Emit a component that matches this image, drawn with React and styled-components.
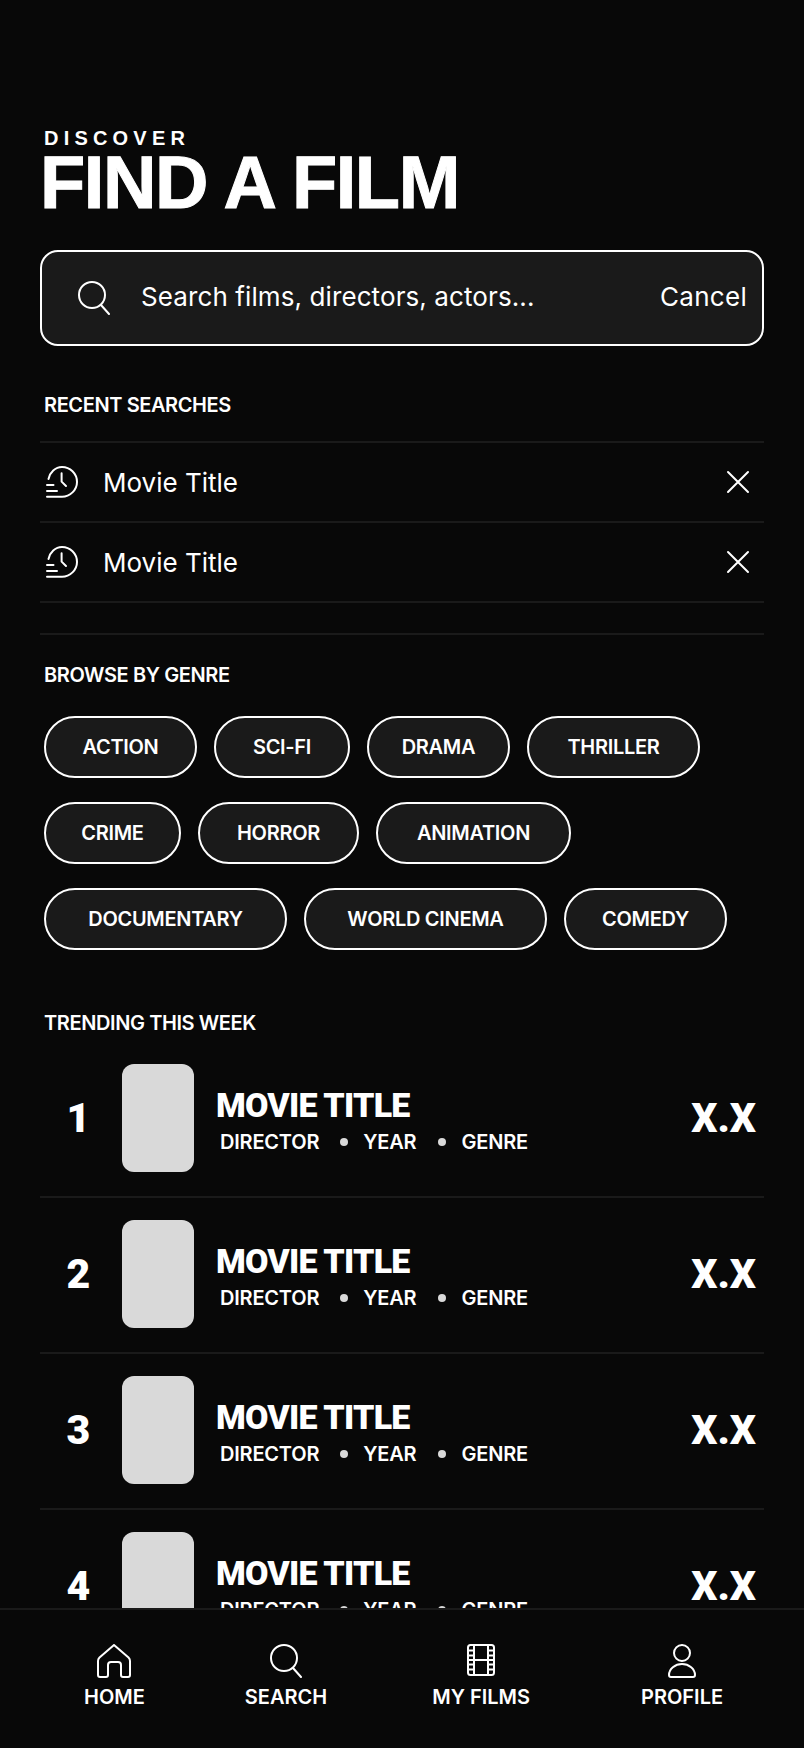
import React from 'react';
import styled, { createGlobalStyle } from 'styled-components';

const GlobalStyle = createGlobalStyle`
  html, body { margin: 0; padding: 0; background: #080808; }
  * { box-sizing: border-box; }
`;

const Screen = styled.div`
  width: 804px;
  height: 1748px;
  background: #080808;
  color: #fff;
  font-family: Inter, "Liberation Sans", sans-serif;
  display: flex;
  flex-direction: column;
  overflow: hidden;
`;

const Scroll = styled.main`
  flex: 1;
  min-height: 0;
  overflow: hidden;
  padding: 129px 40px 0;
`;

const Eyebrow = styled.div`
  font-family: "Liberation Sans", sans-serif;
  font-weight: 700;
  font-size: 20px;
  line-height: 18px;
  letter-spacing: 5.2px;
  margin-left: 4px;
`;

const Title = styled.h1`
  margin: 6px 0 0;
  font-family: "Liberation Sans", sans-serif;
  font-weight: 700;
  font-size: 74px;
  line-height: 60px;
  letter-spacing: -1.4px;
  -webkit-text-stroke: 1px #fff;
`;

const SearchBox = styled.div`
  margin-top: 37px;
  height: 96px;
  display: flex;
  align-items: center;
  padding: 0 15px 0 36px;
  background: #1a1a1a;
  border: 2px solid #fff;
  border-radius: 18px;
`;

const SearchText = styled.span`
  flex: 1;
  margin: 0 0 3px 31px;
  font-size: 26px;
  letter-spacing: 0.1px;
`;

const Cancel = styled.span`
  margin-bottom: 3px;
  font-size: 26px;
  letter-spacing: 0.3px;
`;

const SectionLabel = styled.h2`
  margin: ${(p) => p.$top}px 0 0 4px;
  font-size: 20px;
  line-height: 24px;
  font-weight: 600;
  letter-spacing: -0.4px;
`;

const RecentList = styled.div`
  margin-top: 24px;
  border-top: 2px solid #1a1a1a;
`;

const RecentRow = styled.div`
  height: 80px;
  display: flex;
  align-items: center;
  padding: 0 14px 0 6px;
  border-bottom: 2px solid #1a1a1a;
`;

const RecentName = styled.span`
  flex: 1;
  margin-left: 25px;
  font-size: 26px;
`;

const Divider = styled.div`
  margin-top: 30px;
  height: 2px;
  background: #1a1a1a;
`;

const ChipGroup = styled.div`
  margin: 29px 0 0 4px;
  display: flex;
  flex-direction: column;
  gap: 24px;
`;

const ChipRow = styled.div`
  display: flex;
  gap: 17px;
`;

const Chip = styled.span`
  width: ${(p) => p.$w}px;
  height: 62px;
  display: flex;
  align-items: center;
  justify-content: center;
  background: #1a1a1a;
  border: 2px solid #fff;
  border-radius: 31px;
  font-size: 20px;
  font-weight: 600;
  letter-spacing: -0.3px;
`;

const TrendList = styled.div`
  margin-top: 7px;
`;

const TrendRow = styled.div`
  height: 156px;
  padding: 22px 8px 0 0;
  display: flex;
  align-items: flex-start;
  border-bottom: 2px solid #1a1a1a;
`;

const Rank = styled.span`
  width: 77px;
  margin-right: 5px;
  flex: none;
  height: 108px;
  display: flex;
  align-items: center;
  justify-content: center;
  font-family: Roboto, sans-serif;
  font-size: 41px;
  font-weight: 900;
`;

const Poster = styled.div`
  width: 72px;
  height: 108px;
  flex: none;
  background: #d9d9d9;
  border-radius: 12px;
`;

const Info = styled.div`
  flex: 1;
  margin-left: 22px;
  padding-top: 21px;
`;

const MovieName = styled.div`
  font-family: Roboto, sans-serif;
  font-size: 34px;
  line-height: 40px;
  font-weight: 900;
  letter-spacing: -0.8px;
`;

const Meta = styled.div`
  margin: 5px 0 0 4px;
  display: flex;
  align-items: center;
  font-size: 20px;
  line-height: 24px;
  font-weight: 600;
  letter-spacing: -0.2px;
`;

const Dot = styled.i`
  width: 8px;
  height: 8px;
  margin: 0 15px 0 ${(p) => p.$left}px;
  border-radius: 50%;
  background: #d9d9d9;
`;

const Score = styled.span`
  height: 108px;
  display: flex;
  align-items: center;
  font-family: Roboto, sans-serif;
  font-size: 41px;
  font-weight: 900;
`;

const BottomNav = styled.nav`
  height: 140px;
  flex: none;
  background: #080808;
  border-top: 2px solid #1a1a1a;
  display: flex;
  align-items: flex-start;
  padding: 34px 0 0 84px;
`;

const NavItem = styled.div`
  margin-left: ${(p) => p.$left}px;
  display: flex;
  flex-direction: column;
  align-items: center;
  font-size: 20px;
  line-height: 24px;
  font-weight: 600;
  gap: 7px;
`;

const Icon = styled.svg`
  display: block;
  flex: none;
  fill: none;
  stroke: #fff;
  stroke-width: 2;
  stroke-linecap: round;
  stroke-linejoin: round;
`;

const SearchIcon = () => (
  <Icon width="32" height="34" viewBox="0 0 32 34">
    <circle cx="14" cy="14" r="13" />
    <path d="M23 24l8 9" />
  </Icon>
);

const HistoryIcon = () => (
  <Icon width="32" height="32" viewBox="0 0 32 32">
    <path d="M2.5 13C3.8 6.500 9.300 1 16 1C24 1 31 7.500 31 16C31 24 24 30.800 16 30.800H1" />
    <path d="M15.600 7.300v8.300l4.400 4.400" />
    <path d="M1 19h6.500M1 25h10" />
  </Icon>
);

const CloseIcon = () => (
  <Icon width="24" height="24" viewBox="0 0 24 24">
    <path d="M2 2l20 20M22 2L2 22" />
  </Icon>
);

const HomeIcon = () => (
  <Icon width="34" height="34" viewBox="0 0 34 34">
    <path d="M17 1L31.500 13.500Q33 15 33 17V31a2 2 0 0 1-2 2H26a2 2 0 0 1-2-2V21a3 3 0 0 0-3-3H14a3 3 0 0 0-3 3V31a2 2 0 0 1-2 2H3a2 2 0 0 1-2-2V17Q1 15 2.500 13.500z" />
  </Icon>
);

const FilmIcon = () => (
  <Icon width="28" height="34" viewBox="0 0 28 34">
    <rect x="1" y="1" width="26" height="30" rx="2.5" />
    <path d="M7 1v30M21 1v30M7 16h14M1 6.500h6M1 11.500h6M1 16h6M1 20.500h6M1 25.500h6M21 6.500h6M21 11.500h6M21 16h6M21 20.500h6M21 25.500h6" />
  </Icon>
);

const UserIcon = () => (
  <Icon width="28" height="34" viewBox="0 0 28 34">
    <circle cx="14" cy="9" r="8" />
    <path d="M3 33h22c1.500 0 2-1 2-2 0-6-6-11-13-11S1 25 1 31c0 1 .5 2 2 2z" />
  </Icon>
);

const genres = [
  [['ACTION', 153], ['SCI-FI', 136], ['DRAMA', 143], ['THRILLER', 173]],
  [['CRIME', 137], ['HORROR', 161], ['ANIMATION', 195]],
  [['DOCUMENTARY', 243], ['WORLD CINEMA', 243], ['COMEDY', 163]],
];

const App = () => (
  <Screen>
    <GlobalStyle />
    <Scroll>
      <Eyebrow>DISCOVER</Eyebrow>
      <Title>FIND A FILM</Title>
      <SearchBox>
        <SearchIcon />
        <SearchText>Search films, directors, actors...</SearchText>
        <Cancel>Cancel</Cancel>
      </SearchBox>

      <SectionLabel $top={47}>RECENT SEARCHES</SectionLabel>
      <RecentList>
        {[1, 2].map((n) => (
          <RecentRow key={n}>
            <HistoryIcon />
            <RecentName>Movie Title</RecentName>
            <CloseIcon />
          </RecentRow>
        ))}
      </RecentList>
      <Divider />

      <SectionLabel $top={28}>BROWSE BY GENRE</SectionLabel>
      <ChipGroup>
        {genres.map((row, i) => (
          <ChipRow key={i}>
            {row.map(([name, w]) => (
              <Chip key={name} $w={w}>{name}</Chip>
            ))}
          </ChipRow>
        ))}
      </ChipGroup>

      <SectionLabel $top={61}>TRENDING THIS WEEK</SectionLabel>
      <TrendList>
        {[1, 2, 3, 4].map((n) => (
          <TrendRow key={n}>
            <Rank>{n}</Rank>
            <Poster />
            <Info>
              <MovieName>MOVIE TITLE</MovieName>
              <Meta>
                DIRECTOR
                <Dot $left={21} />
                YEAR
                <Dot $left={22} />
                GENRE
              </Meta>
            </Info>
            <Score>X.X</Score>
          </TrendRow>
        ))}
      </TrendList>
    </Scroll>
    <BottomNav>
      <NavItem $left={0}><HomeIcon />HOME</NavItem>
      <NavItem $left={100}><SearchIcon />SEARCH</NavItem>
      <NavItem $left={105}><FilmIcon />MY FILMS</NavItem>
      <NavItem $left={111}><UserIcon />PROFILE</NavItem>
    </BottomNav>
  </Screen>
);

export default App;
